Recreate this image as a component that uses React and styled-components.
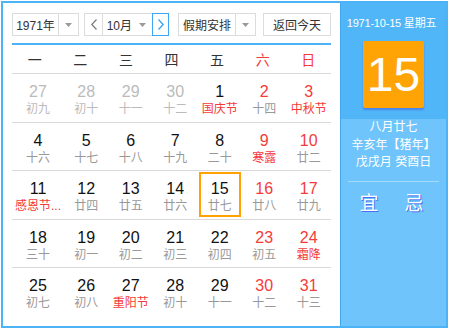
import React from "react";
import styled, { createGlobalStyle } from "styled-components";

const Global = createGlobalStyle`
  html, body { margin: 0; padding: 0; background: #fff; }
  body { font-family: "Liberation Sans", "Noto Sans CJK SC", sans-serif; }
  * { box-sizing: border-box; }
`;

const Page = styled.div`
  padding: 1px;
`;

const Widget = styled.div`
  width: 447px;
  height: 327px;
  border: 2px solid #4cb3f6;
  display: flex;
  background: #fff;
`;

const Left = styled.div`
  width: 337px;
  padding: 10px 9px 0 9px;
  display: flex;
  flex-direction: column;
`;

const Toolbar = styled.div`
  display: flex;
  height: 23px;
  align-items: stretch;
`;

const Select = styled.div`
  display: flex;
  width: ${(p) => p.$w}px;
  margin-left: ${(p) => p.$ml || 0}px;
  border: 1px solid #dcdcdc;
  background: #fff;
  font-size: 12px;
  color: #333;
  white-space: nowrap;
`;

const SelectText = styled.div`
  flex: 1;
  display: flex;
  align-items: center;
  justify-content: ${(p) => (p.$end ? "flex-end" : "center")};
`;

const SelectArrow = styled.div`
  width: ${(p) => p.$w || 20}px;
  border-left: ${(p) => (p.$plain ? "none" : "1px solid #dcdcdc")};
  display: flex;
  align-items: center;
  justify-content: center;
`;

const Tri = () => (
  <svg width="7" height="4" viewBox="0 0 7 4">
    <path d="M0 0 L7 0 L3.5 4 Z" fill="#9a9a9a" />
  </svg>
);

const NavBtn = styled.div`
  width: ${(p) => p.$w}px;
  margin-left: ${(p) => p.$ml || 0}px;
  border: 1px solid ${(p) => (p.$active ? "#3ea6f5" : "#dcdcdc")};
  display: flex;
  align-items: center;
  justify-content: center;
  position: relative;
  z-index: ${(p) => (p.$active ? 1 : 0)};
  background: #fff;
`;

const Chevron = ({ dir, color }) => (
  <svg width="6" height="11" viewBox="0 0 6 11">
    <polyline
      points={dir === "left" ? "5.5,0.5 0.8,5.5 5.5,10.5" : "0.5,0.5 5.2,5.5 0.5,10.5"}
      fill="none"
      stroke={color}
      strokeWidth="1.2"
    />
  </svg>
);

const Button = styled.div`
  width: ${(p) => p.$w}px;
  margin-left: ${(p) => p.$ml || 0}px;
  border: 1px solid #dcdcdc;
  display: flex;
  align-items: center;
  justify-content: center;
  font-size: 12px;
  color: #333;
`;

const Calendar = styled.div`
  margin-top: 7px;
  border-top: 2px solid #4cb3f6;
`;

const HeadRow = styled.div`
  display: grid;
  grid-template-columns: repeat(7, 1fr);
  height: 28px;
`;

const HeadCell = styled.div`
  display: flex;
  align-items: center;
  justify-content: center;
  font-size: 14px;
  color: ${(p) => (p.$red ? "#f43b3b" : "#333")};
`;

const Grid = styled.div`
  display: grid;
  grid-template-columns: repeat(7, 1fr);
  grid-auto-rows: 48.5px;
`;

const Cell = styled.div`
  border-top: 1px solid #dadada;
  padding: 1px 1px 0 1px;
`;

const CellInner = styled.div`
  height: 45px;
  border: 2px solid ${(p) => (p.$sel ? "#ffa200" : "transparent")};
  display: flex;
  flex-direction: column;
  align-items: center;
  padding-top: 5px;
`;

const Num = styled.div`
  font-size: 16px;
  line-height: 20px;
  color: ${(p) => p.$c};
`;

const Lunar = styled.div`
  font-size: 12px;
  line-height: 15px;
  color: ${(p) => p.$c};
  white-space: nowrap;
`;

const Right = styled.div`
  flex: 1;
  border-left: 1px solid #3fa8ef;
  background: #6fc4fb;
  display: flex;
  flex-direction: column;
  align-items: center;
  color: #fff;
`;

const RightTop = styled.div`
  align-self: stretch;
  background: #50b6f8;
  display: flex;
  flex-direction: column;
  align-items: center;
  height: 116px;
`;

const DateLine = styled.div`
  font-size: 11px;
  line-height: 14px;
  margin-top: 13px;
  margin-right: 4px;
  white-space: nowrap;
  letter-spacing: -0.2px;
`;

const DayBox = styled.div`
  margin-top: 11px;
  width: 61px;
  height: 67px;
  background: #ffa404;
  border-radius: 2px;
  box-shadow: 0 2px 2px rgba(70, 90, 220, 0.55);
  display: flex;
  align-items: center;
  justify-content: center;
  font-size: 48px;
  font-family: "Liberation Sans", Arial, sans-serif;
  color: #fff;
`;

const LunarInfo = styled.div`
  font-size: 12px;
  line-height: 17.5px;
  text-align: center;
`;

const Divider = styled.div`
  width: 91px;
  height: 1px;
  background: #a6dafd;
  margin-top: 9px;
`;

const YiJi = styled.div`
  display: flex;
  gap: 26px;
  margin-top: 11px;
  margin-right: 4px;
  font-size: 19px;
  line-height: 22px;
  text-shadow: 1px 1px 0 #4a6ff2;
`;

const RED = "#f43b3b";
const BLACK = "#111";
const GRAY = "#999";
const LIGHT = "#bbb";

const days = [
  ["27", "初九", "p"], ["28", "初十", "p"], ["29", "十一", "p"], ["30", "十二", "p"],
  ["1", "国庆节", "n", "f"], ["2", "十四", "w"], ["3", "中秋节", "w", "f"],
  ["4", "十六", "n"], ["5", "十七", "n"], ["6", "十八", "n"], ["7", "十九", "n"],
  ["8", "二十", "n"], ["9", "寒露", "w", "f"], ["10", "廿二", "w"],
  ["11", "感恩节...", "n", "f"], ["12", "廿四", "n"], ["13", "廿五", "n"], ["14", "廿六", "n"],
  ["15", "廿七", "n", null, true], ["16", "廿八", "w"], ["17", "廿九", "w"],
  ["18", "三十", "n"], ["19", "初一", "n"], ["20", "初二", "n"], ["21", "初三", "n"],
  ["22", "初四", "n"], ["23", "初五", "w"], ["24", "霜降", "w", "f"],
  ["25", "初七", "n"], ["26", "初八", "n"], ["27", "重阳节", "n", "f"], ["28", "初十", "n"],
  ["29", "十一", "n"], ["30", "十二", "w"], ["31", "十三", "w"],
];

const weekdays = ["一", "二", "三", "四", "五", "六", "日"];

export default function App() {
  return (
    <Page>
      <Global />
      <Widget>
        <Left>
          <Toolbar>
            <Select $w={67}>
              <SelectText>1971年</SelectText>
              <SelectArrow><Tri /></SelectArrow>
            </Select>
            <NavBtn $w={19} $ml={5}><Chevron dir="left" color="#777" /></NavBtn>
            <Select $w={51} $ml={-1}>
              <SelectText $end>10月</SelectText>
              <SelectArrow $plain $w={20}><Tri /></SelectArrow>
            </Select>
            <NavBtn $w={17} $ml={-1} $active><Chevron dir="right" color="#2f9ef2" /></NavBtn>
            <Select $w={78} $ml={9}>
              <SelectText>假期安排</SelectText>
              <SelectArrow><Tri /></SelectArrow>
            </Select>
            <Button $w={68} $ml={7}>返回今天</Button>
          </Toolbar>
          <Calendar>
            <HeadRow>
              {weekdays.map((w, i) => (
                <HeadCell key={w} $red={i >= 5}>{w}</HeadCell>
              ))}
            </HeadRow>
            <Grid>
              {days.map(([n, l, t, f, sel], i) => {
                const nc = t === "p" ? LIGHT : t === "w" ? RED : BLACK;
                const lc = t === "p" ? LIGHT : f ? RED : GRAY;
                return (
                  <Cell key={i}>
                    <CellInner $sel={sel}>
                      <Num $c={nc}>{n}</Num>
                      <Lunar $c={lc}>{l}</Lunar>
                    </CellInner>
                  </Cell>
                );
              })}
            </Grid>
          </Calendar>
        </Left>
        <Right>
          <RightTop>
            <DateLine>1971-10-15 星期五</DateLine>
            <DayBox>15</DayBox>
          </RightTop>
          <LunarInfo>
            八月廿七<br />
            辛亥年【猪年】<br />
            戊戌月 癸酉日
          </LunarInfo>
          <Divider />
          <YiJi>
            <span>宜</span>
            <span>忌</span>
          </YiJi>
        </Right>
      </Widget>
    </Page>
  );
}
